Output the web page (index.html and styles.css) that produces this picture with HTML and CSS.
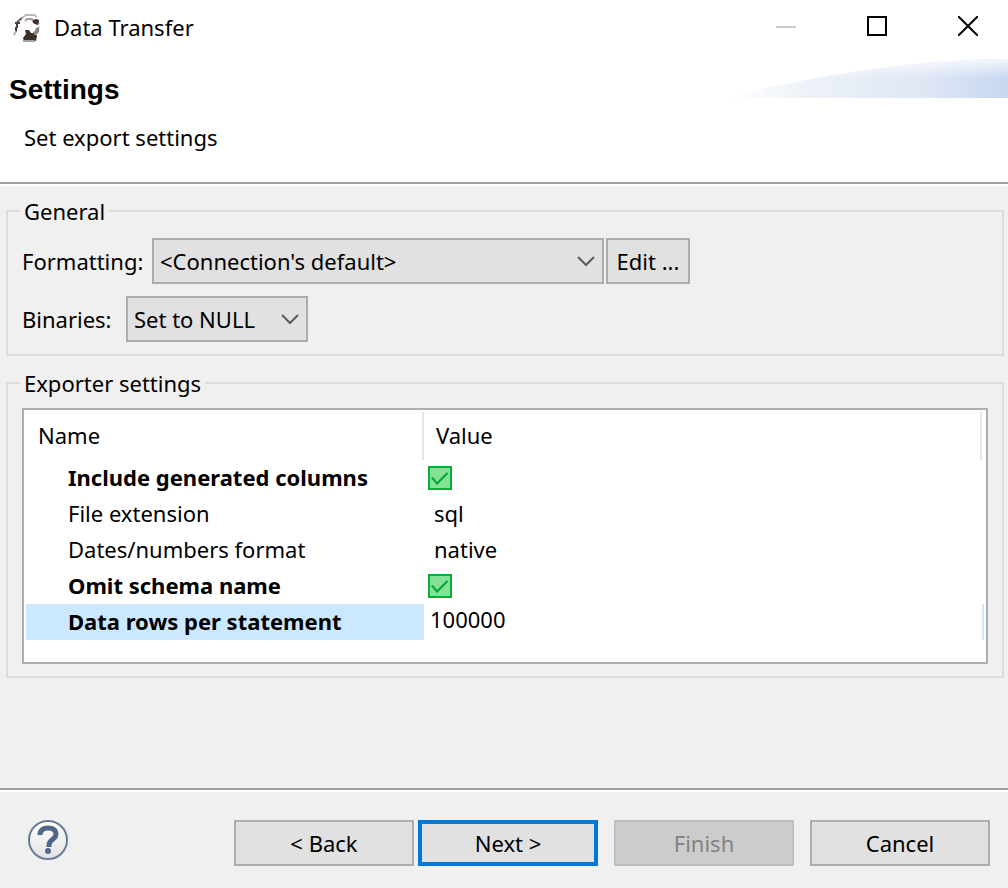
FILE: index.html
```html
<!DOCTYPE html>
<html lang="en">
<head>
<meta charset="utf-8">
<title>Data Transfer</title>
<link rel="stylesheet" href="styles.css">
</head>
<body>
<div class="window">
  <header class="titlebar">
    <svg class="app-icon" viewBox="0 0 28 30" aria-hidden="true">
      <path d="M9 5L13 2h8l3 2" fill="none" stroke="#bdb6b3" stroke-width="2"/>
      <path d="M12 8l2-2h5l1 3" fill="none" stroke="#a8a09d" stroke-width="2"/>
      <path d="M4 9l5-4" stroke="#6b5f5c" stroke-width="2"/>
      <path d="M2 9h5v2H5v4H4v4H2v-5h1v-3H2z" fill="#4a3d3a"/>
      <path d="M1 22l2-4" stroke="#b5adaa" stroke-width="2"/>
      <path d="M20 7l3-1 3 1v4l-2 1-4-2z" fill="#3c2f2c"/>
      <path d="M26 9v8" stroke="#d0cac7" stroke-width="1"/>
      <path d="M12 17h4l2 3h4l2 3-1 5H11l-1-3 3-4z" fill="#3c2f2c"/>
      <path d="M20 19l2-1 1-3 3-1v5l-3 3h-2z" fill="#8b827f"/>
      <path d="M10 28h12" stroke="#aaa19e" stroke-width="2"/>
    </svg>
    <span class="title">Data Transfer</span>
    <div class="window-controls">
      <button type="button" aria-label="Minimize" disabled><svg viewBox="0 0 20 20"><path d="M0 11h20" stroke="#ccc" stroke-width="2"/></svg></button>
      <button type="button" aria-label="Maximize"><svg viewBox="0 0 20 20"><path d="M1 1h18v18H1z" fill="none" stroke="#000" stroke-width="2"/></svg></button>
      <button type="button" aria-label="Close"><svg viewBox="0 0 20 20"><path d="M0 0l20 20M20 0L0 20" stroke="#000" stroke-width="2"/></svg></button>
    </div>
  </header>

  <section class="banner">
    <svg class="swoosh" viewBox="0 0 284 42" preserveAspectRatio="none" aria-hidden="true">
      <defs>
        <linearGradient id="sweep"><stop offset="0" stop-color="#fff"/><stop offset=".3" stop-color="#edf2f8"/><stop offset=".7" stop-color="#dfe7f5"/><stop offset="1" stop-color="#c6d7f1"/></linearGradient>
        <linearGradient id="fade" x2="0" y2="1"><stop offset="0" stop-color="#fff" stop-opacity=".8"/><stop offset=".5" stop-color="#fff" stop-opacity="0"/></linearGradient>
      </defs>
      <path d="M0 40Q60 24 140 12Q215 1 284 1V40z" fill="url(#sweep)"/>
      <path d="M0 40Q60 24 140 12Q215 1 284 1V40z" fill="url(#fade)"/>
    </svg>
    <h1>Settings</h1>
    <p>Set export settings</p>
  </section>

  <main class="content">
    <fieldset class="group general">
      <legend>General</legend>
      <div class="field formatting">
        <label for="formatting">Formatting:</label>
        <span class="combo combo-wide">
          <select id="formatting"><option>&lt;Connection's default&gt;</option></select>
          <svg viewBox="0 0 18 11" aria-hidden="true"><path d="M1 1l8 8 8-8" fill="none" stroke="#5c5c5c" stroke-width="2"/></svg>
        </span>
        <button type="button" class="button edit">Edit ...</button>
      </div>
      <div class="field binaries">
        <label for="binaries">Binaries:</label>
        <span class="combo combo-small">
          <select id="binaries"><option>Set to NULL</option></select>
          <svg viewBox="0 0 18 11" aria-hidden="true"><path d="M1 1l8 8 8-8" fill="none" stroke="#5c5c5c" stroke-width="2"/></svg>
        </span>
      </div>
    </fieldset>

    <fieldset class="group exporter">
      <legend>Exporter settings</legend>
      <div class="table-frame">
        <table>
          <colgroup><col class="col-name"><col><col class="col-end"></colgroup>
          <thead><tr><th scope="col">Name</th><th scope="col">Value</th><td></td></tr></thead>
          <tbody>
            <tr class="changed"><th scope="row"><label for="generated">Include generated columns</label></th><td class="check"><input type="checkbox" id="generated" checked></td><td></td></tr>
            <tr><th scope="row">File extension</th><td>sql</td><td></td></tr>
            <tr><th scope="row">Dates/numbers format</th><td>native</td><td></td></tr>
            <tr class="changed"><th scope="row"><label for="omit">Omit schema name</label></th><td class="check"><input type="checkbox" id="omit" checked></td><td></td></tr>
            <tr class="changed selected"><th scope="row"><label for="rows">Data rows per statement</label></th><td class="editor"><input type="text" id="rows" value="100000"></td><td></td></tr>
          </tbody>
        </table>
      </div>
    </fieldset>
  </main>

  <footer class="footer">
    <button type="button" class="help" aria-label="Help">
      <svg viewBox="0 0 40 40">
        <defs><linearGradient id="disc" x2="0" y2="1"><stop offset="0" stop-color="#fff"/><stop offset="1" stop-color="#e2e2e4"/></linearGradient></defs>
        <circle cx="20" cy="20" r="19" fill="url(#disc)" stroke="#6a7b9b" stroke-width="2"/>
        <path d="M12 15c0-5 3-7 8-7s8 2 8 6c0 6-7 5-7 11v2" fill="none" stroke="#52658b" stroke-width="5"/>
        <circle cx="20" cy="31" r="3" fill="#52658b"/>
      </svg>
    </button>
    <div class="actions">
      <div class="pager">
        <button type="button" class="button">&lt; Back</button>
        <button type="button" class="button primary">Next &gt;</button>
      </div>
      <button type="button" class="button" disabled>Finish</button>
      <button type="button" class="button">Cancel</button>
    </div>
  </footer>
</div>
</body>
</html>
```

FILE: styles.css
```css
* { box-sizing: border-box; }

body {
  margin: 0;
  background: #f0f0f0;
  color: #000;
  font: 22px/32px "Noto Sans", "Open Sans", sans-serif;
}

button, input, select { font: inherit; color: inherit; }

.window { display: flex; flex-direction: column; min-height: 100vh; }

.titlebar {
  display: flex;
  align-items: center;
  height: 56px;
  padding-left: 13px;
  background: #fff;
}
.app-icon { width: 28px; height: 30px; margin-right: 13px; }
.title { padding-bottom: 2px; }
.window-controls { display: flex; margin-left: auto; padding-right: 20px; gap: 50px; }
.window-controls button {
  display: flex;
  padding: 0 10px 4px;
  border: 0;
  background: none;
}
.window-controls svg { width: 20px; height: 20px; }
.window-controls button + button { margin-left: 1px; }

.banner {
  position: relative;
  height: 130px;
  padding: 18px 9px 0;
  background: #fff;
  border-bottom: 2px solid #fff;
  box-shadow: inset 0 -2px #a0a0a0;
}
.swoosh { position: absolute; top: 2px; right: 0; width: 28%; height: 42px; }
.banner h1 { margin: 0 0 15px; font: bold 28px/32px "Liberation Sans", sans-serif; }
.banner p { margin: 0; padding-left: 15px; }

.content { flex: 1; padding: 9px 4px 0 6px; }

.group { min-width: 0; margin: 0; border: 2px solid #dcdcdc; }
.group legend { margin-left: -2px; padding: 0 4px; }
.general { padding: 11px 14px 12px; }
.exporter { margin-top: 11px; padding: 9px 14px 12px; }

.field { display: flex; align-items: center; }
.field + .field { margin-top: 12px; }
.formatting label { width: 130px; }
.binaries label { width: 104px; }

.combo { position: relative; display: block; }
.combo-wide { width: 452px; }
.combo-small { width: 182px; }
.combo select {
  display: block;
  width: 100%;
  height: 46px;
  padding: 0 32px 0 6px;
  border: 2px solid #adadad;
  border-radius: 0;
  background: #e1e1e1;
  appearance: none;
}
.combo svg { position: absolute; top: 18px; right: 9px; width: 18px; height: 11px; pointer-events: none; }

.button {
  width: 180px;
  height: 46px;
  padding: 0;
  border: 2px solid #adadad;
  background: #e1e1e1;
  text-align: center;
}
.button:disabled { border-color: #bfbfbf; background: #ccc; color: #838383; }
.primary { border: 4px solid #0078d7; }
.edit { width: 84px; margin-left: 2px; }

.table-frame { min-height: 256px; padding: 2px; border: 2px solid #abadb3; background: #fff; }
table { width: 100%; border-collapse: separate; border-spacing: 0; table-layout: fixed; }
.col-name { width: 398px; }
.col-end { width: 2px; }
th, td { height: 36px; padding: 0 0 2px; text-align: left; font-weight: normal; }
thead th { height: 48px; padding-left: 12px; border-right: 2px solid #e5e5e5; }
thead td { height: 48px; }
tbody th { padding-left: 42px; }
tbody td:nth-child(2) { padding-left: 10px; }
.changed th { font-weight: bold; }
.selected th, .selected td:last-child { background: #cce8ff; }
tbody .check:nth-child(2) { padding: 0 0 0 4px; }
tbody .editor:nth-child(2) { padding: 0; }
.editor input {
  display: block;
  width: 100%;
  height: 36px;
  padding: 0 0 6px 6px;
  border: 0;
  outline: 0;
  background: #fff;
}
.check input {
  display: block;
  width: 24px;
  height: 24px;
  margin: 0;
  border: 2px solid #05b03b;
  background: #84e296;
  appearance: none;
}
.check input:checked::before {
  content: "";
  display: block;
  width: 20px;
  height: 20px;
  background: #05a338;
  clip-path: polygon(1px 10px, 3px 9px, 7px 14px, 17px 4px, 18px 6px, 7px 17px);
}

.footer {
  display: flex;
  align-items: flex-start;
  justify-content: space-between;
  height: 100px;
  padding: 30px 18px 0 28px;
  border-top: 2px solid #a0a0a0;
  box-shadow: inset 0 2px #fff;
}
.help { display: flex; padding: 0; border: 0; background: none; }
.help svg { width: 40px; height: 40px; }
.actions { display: flex; gap: 16px; }
.pager { display: flex; gap: 4px; }
```
